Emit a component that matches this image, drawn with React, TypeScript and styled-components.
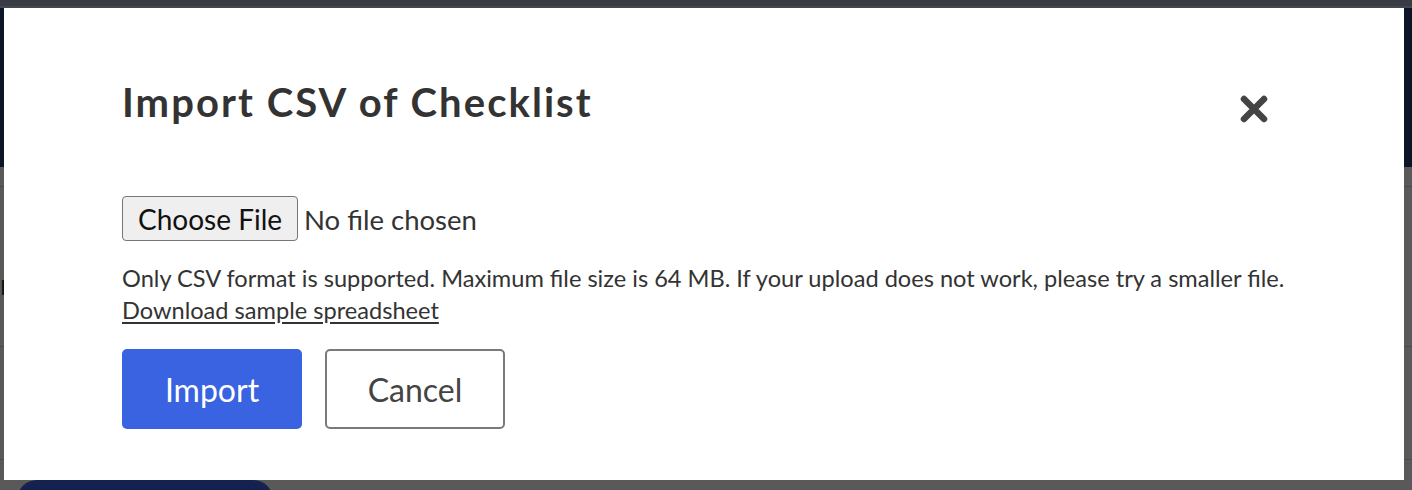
import styled, { createGlobalStyle } from 'styled-components'

const GlobalStyle = createGlobalStyle`
  html, body {
    margin: 0;
    padding: 0;
    height: 100%;
    overflow: hidden;
    background: #595959;
  }
`

const Page = styled.div`
  position: relative;
  width: 1412px;
  height: 490px;
  overflow: hidden;
  display: flex;
  flex-direction: column;
  background: #595959;
  font-family: Lato, 'Liberation Sans', sans-serif;

  & > * {
    flex-shrink: 0;
  }
`

const TopStrip = styled.div`
  height: 6px;
  background: #3a3c45;
  border-bottom: 2px solid #46474c;
`

const Header = styled.div`
  height: 159px;
  background: #0d1426;
`

const Row = styled.div<{ $h: number }>`
  height: ${(p) => p.$h}px;
  box-sizing: border-box;
  padding-top: ${(p) => (p.$h > 100 ? 40 : 0)}px;
  border-bottom: 1px solid #4c4c4c;
  display: flex;
  align-items: center;
  color: #111;
  font-size: 22px;
`

const Footer = styled.div`
  padding: 20px 0 0 17px;
`

const Pill = styled.div`
  width: 256px;
  height: 40px;
  border-radius: 28px;
  background: #15224f;
`

const Modal = styled.div`
  position: absolute;
  top: 8px;
  left: 4px;
  width: 1400px;
  height: 472px;
  box-sizing: border-box;
  background: #fff;
  padding: 70px 90px 0 118px;
  display: flex;
  flex-direction: column;
`

const TitleBar = styled.div`
  display: flex;
  align-items: flex-start;
  justify-content: space-between;
`

const Title = styled.h2`
  margin: 0;
  font-size: 40px;
  line-height: 48px;
  font-weight: 700;
  letter-spacing: 2.05px;
  color: #333;
`

const CloseButton = styled.button`
  margin: 15px 44px 0 0;
  border: 0;
  background: none;
  padding: 0;
  width: 32px;
  height: 32px;
  display: flex;
  align-items: center;
  justify-content: center;
  cursor: pointer;
`

const FileInput = styled.input`
  margin-top: 70px;
  font-family: Lato, 'Liberation Sans', sans-serif;
  font-size: 27.5px;
  color: #333;
  align-self: flex-start;

  &::file-selector-button {
    font-family: inherit;
    font-size: 28px;
    color: #111;
    background: #efefef;
    border: 1px solid #767676;
    border-radius: 4px;
    height: 45px;
    padding: 0 15px;
    margin-right: 6px;
  }
`

const Hint = styled.p`
  margin: 21px 0 0;
  font-size: 23.6px;
  line-height: 32px;
  color: #333;
  white-space: nowrap;
`

const SampleLink = styled.a`
  color: #333;
  text-decoration: underline;
  text-underline-offset: 3px;
`

const Actions = styled.div`
  display: flex;
  gap: 23px;
  margin-top: 23px;
`

const ActionButton = styled.button<{ $primary?: boolean }>`
  width: 180px;
  height: 80px;
  box-sizing: border-box;
  border-radius: 5px;
  font-family: Lato, 'Liberation Sans', sans-serif;
  font-size: 32px;
  cursor: pointer;
  color: ${(p) => (p.$primary ? '#fff' : '#444')};
  background: ${(p) => (p.$primary ? '#3963e1' : '#fff')};
  border: ${(p) => (p.$primary ? '0' : '2px solid #7a7a7a')};
`

const App = () => {
  return (
    <>
      <GlobalStyle />
      <Page>
        <TopStrip />
        <Header />
        <Row $h={20} />
        <Row $h={160}>
          <span>Recent</span>
        </Row>
        <Row $h={113} />
        <Footer>
          <Pill />
        </Footer>

        <Modal>
          <TitleBar>
            <Title>Import CSV of Checklist</Title>
            <CloseButton aria-label="Close">
              <svg width="32" height="32" viewBox="0 0 32 32">
                <path
                  d="M6 6 L26 26 M26 6 L6 26"
                  stroke="#444"
                  strokeWidth="6.5"
                  strokeLinecap="round"
                />
              </svg>
            </CloseButton>
          </TitleBar>
          <FileInput type="file" accept=".csv" />
          <Hint>
            Only CSV format is supported. Maximum file size is 64 MB. If your
            upload does not work, please try a smaller file.
            <br />
            <SampleLink href="#">Download sample spreadsheet</SampleLink>
          </Hint>
          <Actions>
            <ActionButton $primary>Import</ActionButton>
            <ActionButton>Cancel</ActionButton>
          </Actions>
        </Modal>
      </Page>
    </>
  )
}

export default App
